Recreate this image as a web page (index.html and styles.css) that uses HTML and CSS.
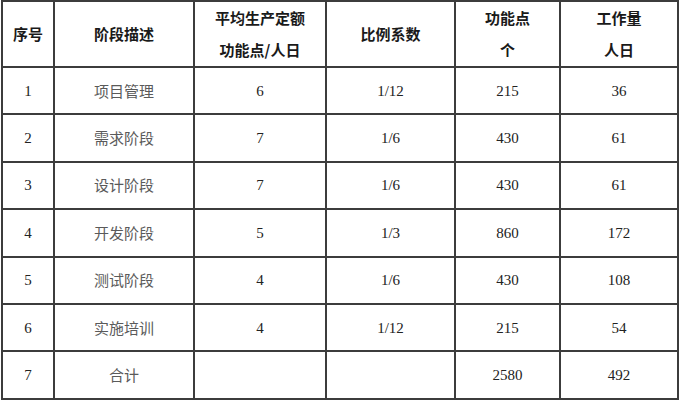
FILE: index.html
```html
<!DOCTYPE html>
<html lang="zh-CN">
<head>
<meta charset="utf-8">
<title>工作量估算</title>
<link rel="stylesheet" href="styles.css">
</head>
<body>
<table class="est">
  <colgroup>
    <col class="c-no">
    <col class="c-stage">
    <col class="c-rate">
    <col class="c-ratio">
    <col class="c-fp">
    <col class="c-work">
  </colgroup>
  <thead>
    <tr class="head">
      <th>序号</th>
      <th>阶段描述</th>
      <th>平均生产定额<br>功能点/人日</th>
      <th>比例系数</th>
      <th>功能点<br>个</th>
      <th>工作量<br>人日</th>
    </tr>
  </thead>
  <tbody>
    <tr><td class="num">1</td><td class="zh">项目管理</td><td class="num">6</td><td class="num">1/12</td><td class="num">215</td><td class="num">36</td></tr>
    <tr><td class="num">2</td><td class="zh">需求阶段</td><td class="num">7</td><td class="num">1/6</td><td class="num">430</td><td class="num">61</td></tr>
    <tr><td class="num">3</td><td class="zh">设计阶段</td><td class="num">7</td><td class="num">1/6</td><td class="num">430</td><td class="num">61</td></tr>
    <tr><td class="num">4</td><td class="zh">开发阶段</td><td class="num">5</td><td class="num">1/3</td><td class="num">860</td><td class="num">172</td></tr>
    <tr><td class="num">5</td><td class="zh">测试阶段</td><td class="num">4</td><td class="num">1/6</td><td class="num">430</td><td class="num">108</td></tr>
    <tr><td class="num">6</td><td class="zh">实施培训</td><td class="num">4</td><td class="num">1/12</td><td class="num">215</td><td class="num">54</td></tr>
    <tr><td class="num">7</td><td class="zh">合计</td><td class="num"></td><td class="num"></td><td class="num">2580</td><td class="num">492</td></tr>
  </tbody>
</table>
</body>
</html>
```

FILE: styles.css
```css
html, body {
  margin: 0;
  padding: 0;
  background: #ffffff;
}

.est {
  border-collapse: collapse;
  table-layout: fixed;
  width: 678px;
  margin: 0 0 0 1px;
}

.c-no { width: 52px; }
.c-stage { width: 140px; }
.c-rate { width: 132px; }
.c-ratio { width: 129px; }
.c-fp { width: 105px; }
.c-work { width: 118px; }

.est th,
.est td {
  border: 2px solid #3c3c3c;
  padding: 0;
  text-align: center;
  vertical-align: middle;
}

.head th {
  height: 63px;
  font-family: "Noto Sans CJK SC", sans-serif;
  font-weight: 700;
  font-size: 15px;
  line-height: 32px;
  color: #1a1a1a;
}

.est tbody td {
  height: 45.4px;
  font-size: 15px;
  line-height: 20px;
}

.est td.num {
  font-family: "Liberation Serif", serif;
  color: #222222;
}

.est td.zh {
  font-family: "Noto Sans CJK SC", sans-serif;
  font-weight: 400;
  color: #5a5a5a;
}
```
